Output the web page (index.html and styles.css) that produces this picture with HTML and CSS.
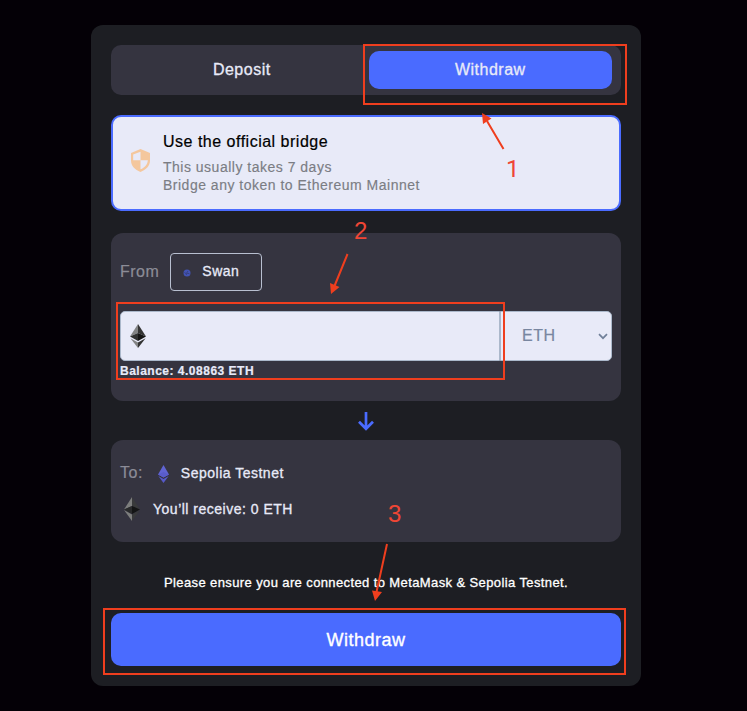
FILE: index.html
```html
<!DOCTYPE html>
<html lang="en">
<head>
<meta charset="utf-8">
<title>Bridge – Withdraw</title>
<link rel="stylesheet" href="styles.css">
</head>
<body>
<main class="card">
  <nav class="tabs">
    <button class="tab">Deposit</button>
    <button class="tab active">Withdraw</button>
  </nav>

  <section class="option">
    <svg class="shield" viewBox="0 0 20 24"><path fill="#f4c79d" fill-rule="evenodd" d="M10 0 20 4v8c0 5.500-4.200 10-10 12C4.200 22 0 17.500 0 12V4zM10 2.700 2.300 5.600V11.700H10zM10 11.700V21.300C14.500 19.500 17.500 16 17.700 11.700z"/></svg>
    <div>
      <h2 class="option-title">Use the official bridge</h2>
      <p class="option-text">This usually takes 7 days</p>
      <p class="option-text">Bridge any token to Ethereum Mainnet</p>
    </div>
  </section>

  <section class="panel from">
    <div class="from-row">
      <span class="label">From</span>
      <div class="network">
        <svg class="swan" viewBox="0 0 8 8"><circle cx="4" cy="4" r="3.500" fill="#4253b4"/><path d="M1.500 3.200 3 4.800 5 2M3 6 4.500 4.200 6.500 4.800" fill="none" stroke="#303660" stroke-width=".6"/></svg>
        <span>Swan</span>
      </div>
    </div>
    <div class="amount-row">
      <div class="amount">
        <svg class="eth" viewBox="0 0 16 24"><path fill="#828384" d="M8 0v9L0 12.500z"/><path fill="#343434" d="M8 0v9l8 3.500z"/><path fill="#2f3030" d="M0 12.500 8 9v8z"/><path fill="#141414" d="M16 12.500 8 9v8z"/><path fill="#828384" d="M.4 14.300 8 18.500V24z"/><path fill="#343434" d="M15.600 14.300 8 18.500V24z"/></svg>
      </div>
      <div class="token">
        <span>ETH</span>
        <svg class="chevron" viewBox="0 0 10 7"><path d="M1 1.200 5 5.200 9 1.200" fill="none" stroke="#71809a" stroke-width="1.700"/></svg>
      </div>
    </div>
    <p class="balance">Balance: 4.08863 ETH</p>
  </section>

  <svg class="down" viewBox="0 0 16 19"><path d="M8 0V17M1 9.800 8 16.800 15 9.800" fill="none" stroke="#4a6bff" stroke-width="2.700"/></svg>

  <section class="panel to">
    <div class="to-row">
      <span class="label">To:</span>
      <svg class="sepolia" viewBox="0 0 11 18"><path fill="#6064d3" d="M5.500 0 11 9.500 5.500 12.500 0 9.500z"/><path fill="#595ccb" d="M5.500 7 11 9.500 5.500 12.500 0 9.500z"/><path fill="#5659c8" d="M.3 11 5.500 13.900 10.700 11 5.500 18z"/></svg>
      <span>Sepolia Testnet</span>
    </div>
    <div class="receive-row">
      <svg class="eth-dark" viewBox="0 0 16 24"><path fill="#7d7e7d" d="M8 0v9L0 12.500z"/><path fill="#393a3b" d="M8 0v9l8 3.500z"/><path fill="#292a2b" d="M0 12.500 8 9v8z"/><path fill="#141515" d="M16 12.500 8 9v8z"/><path fill="#7d7e7d" d="M0 13 8 17.500V24z"/><path fill="#393a3b" d="M16 13 8 17.500V24z"/></svg>
      <span>You’ll receive: 0 ETH</span>
    </div>
  </section>

  <p class="notice">Please ensure you are connected to MetaMask &amp; Sepolia Testnet.</p>
  <button class="submit">Withdraw</button>
</main>

<svg class="marks" viewBox="0 0 747 711">
  <g fill="none" stroke="#ef3e1e" stroke-width="2">
    <path d="M364 45H626V104H364zM117 303H504V379H117zM104 609H625V674H104z"/>
    <path d="M503.500 149 487 121M347.500 254 334.500 286M387 544 376.500 592"/>
  </g>
  <path fill="#ef3e1e" d="M482 113 491.500 118.500 483 124zM331 294 330 283 339.500 287zM375 601 372 590.500 382 592z"/>
</svg>
<span class="step step-1">1</span>
<span class="step step-2">2</span>
<span class="step step-3">3</span>
</body>
</html>
```
FILE: styles.css
```css
* { box-sizing: border-box; }
body {
  margin: 0;
  padding: 25px 0 25px 91px;
  height: 711px;
  overflow: hidden;
  background: #040006;
  color: #e8eaf8;
  font-family: "Liberation Sans", Arial, sans-serif;
  letter-spacing: .5px;
}
h2, p { margin: 0; font-weight: 400; }
button {
  border: 0;
  padding: 0;
  font-family: inherit;
  letter-spacing: inherit;
  color: inherit;
}
svg { display: block; flex: none; }

.card {
  width: 550px;
  height: 661px;
  padding: 20px;
  border-radius: 12px;
  background: #1d1e23;
}
.tabs {
  display: flex;
  height: 50px;
  padding: 6px 9px;
  gap: 5px;
  border-radius: 10px;
  background: #353440;
}
.tab {
  flex: 1;
  height: 38px;
  border-radius: 10px;
  background: none;
  font-size: 16px;
  -webkit-text-stroke: .3px;
}
.active { background: #4a6bff; }

.option {
  display: flex;
  height: 96px;
  margin-top: 20px;
  padding: 15px 18px;
  gap: 13px;
  border: 2px solid #4a6bff;
  border-radius: 10px;
  background: #e8eaf8;
}
.shield { width: 19px; height: 23px; margin-top: 17px; }
.option-title { margin-bottom: 7px; font-size: 16px; line-height: 19px; color: #000; -webkit-text-stroke: .2px; }
.option-text { font-size: 14px; line-height: 18px; color: #7b7d84; -webkit-text-stroke: .15px; }

.panel { border-radius: 12px; background: #353440; padding: 20px 9px; }
.from { height: 168px; margin-top: 22px; }
.label { font-size: 16px; color: #8c8c97; -webkit-text-stroke: .2px; }
.from-row { display: flex; align-items: center; gap: 11px; height: 38px; }
.network {
  display: flex;
  align-items: center;
  width: 92px;
  height: 38px;
  padding: 0 0 2px 12px;
  gap: 11px;
  border: 1px solid #b8bfd0;
  border-radius: 4px;
  font-size: 14px;
  -webkit-text-stroke: .3px;
}
.swan { width: 8px; height: 8px; margin-top: 3px; }
.amount-row { display: flex; height: 50px; margin-top: 20px; }
.amount, .token {
  display: flex;
  align-items: center;
  border: 1px solid #abb8cb;
  background: #e8eaf8;
}
.amount { width: 380px; padding-left: 9px; border-radius: 5px 0 0 5px; }
.token {
  flex: 1;
  justify-content: space-between;
  padding: 0 3px 0 21px;
  border-radius: 0 5px 5px 0;
  font-size: 16px;
  color: #7886a0;
  -webkit-text-stroke: .2px;
}
.eth { width: 16px; height: 24px; }
.chevron { width: 10px; height: 7px; }
.balance { margin-top: 3px; font-size: 12px; line-height: 14px; font-weight: 700; -webkit-text-stroke: .2px; }

.down { width: 16px; height: 19px; margin: 10px auto; position: relative; top: 1px; }

.to { height: 102px; padding-top: 22px; font-size: 14px; -webkit-text-stroke: .3px; }
.to-row { display: flex; align-items: center; height: 22px; }
.sepolia { width: 11px; height: 18px; margin: 1px 12px 0 15px; }
.receive-row { display: flex; align-items: center; height: 24px; margin-top: 13px; padding-left: 4px; gap: 13px; }
.eth-dark { width: 16px; height: 24px; }

.notice { margin-top: 33px; line-height: 16px; font-size: 13px; letter-spacing: .39px; text-align: center; color: #fff; -webkit-text-stroke: .3px; }
.submit {
  display: block;
  width: 100%;
  height: 53px;
  margin-top: 22px;
  padding-top: 1px;
  border-radius: 10px;
  background: #4a6bff;
  color: #fff;
  font-size: 18px;
  -webkit-text-stroke: .35px;
}

/* Walkthrough annotations drawn over the form */
.marks { position: absolute; left: 0; top: 0; width: 747px; height: 711px; pointer-events: none; }
.step { position: absolute; font-size: 24px; line-height: 28px; letter-spacing: 0; color: #ef4635; }
.step-1 { left: 506px; top: 155px; font-family: Roboto, sans-serif; }
.step-2 { left: 354px; top: 217px; }
.step-3 { left: 388px; top: 500px; }
```
